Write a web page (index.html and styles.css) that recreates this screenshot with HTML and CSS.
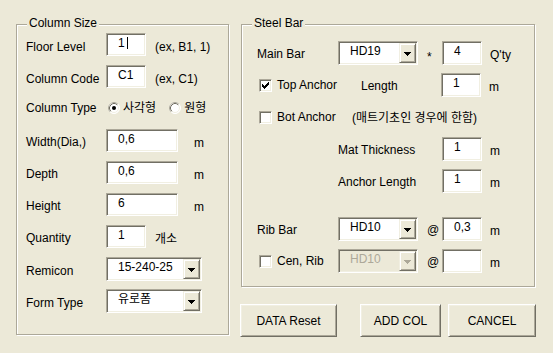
FILE: index.html
```html
<!DOCTYPE html>
<html lang="ko">
<head>
<meta charset="utf-8">
<title>Column</title>
<link rel="stylesheet" href="styles.css">
</head>
<body>
<div class="dialog">
  <section class="group group-column">
    <div class="group-title">Column Size</div>
    <div class="rows">
      <div class="row row-hi">
        <span class="label">Floor Level</span>
        <span class="edit">1<span class="caret"></span></span>
        <span class="hint">(ex, B1, 1)</span>
      </div>
      <div class="row row-hi">
        <span class="label">Column Code</span>
        <span class="edit">C1</span>
        <span class="hint">(ex, C1)</span>
      </div>
      <div class="row row-radio">
        <span class="label">Column Type</span>
        <span class="radio-item">
          <svg class="radio" width="12" height="12" viewBox="0 0 12 12"><circle cx="6" cy="6" r="5.5" fill="#fff" stroke="#fff"/><path d="M2.11 9.89A5.5 5.5 0 0 1 9.89 2.11" fill="none" stroke="#aca899"/><circle cx="6" cy="6" r="4.5" fill="#fff" stroke="#f1efe2"/><path d="M2.82 9.18A4.5 4.5 0 0 1 9.18 2.82" fill="none" stroke="#716f64"/><circle cx="6" cy="6" r="2" fill="#000"/></svg>
          사각형
        </span>
        <span class="radio-item radio-second">
          <svg class="radio" width="12" height="12" viewBox="0 0 12 12"><circle cx="6" cy="6" r="5.5" fill="#fff" stroke="#fff"/><path d="M2.11 9.89A5.5 5.5 0 0 1 9.89 2.11" fill="none" stroke="#aca899"/><circle cx="6" cy="6" r="4.5" fill="#fff" stroke="#f1efe2"/><path d="M2.82 9.18A4.5 4.5 0 0 1 9.18 2.82" fill="none" stroke="#716f64"/></svg>
          원형
        </span>
      </div>
      <div class="row">
        <span class="label">Width(Dia,)</span>
        <span class="edit edit-long">0,6</span>
        <span class="unit unit-far">m</span>
      </div>
      <div class="row">
        <span class="label">Depth</span>
        <span class="edit edit-long">0,6</span>
        <span class="unit unit-far">m</span>
      </div>
      <div class="row">
        <span class="label">Height</span>
        <span class="edit edit-long">6</span>
        <span class="unit unit-far">m</span>
      </div>
      <div class="row">
        <span class="label">Quantity</span>
        <span class="edit">1</span>
        <span class="hint">개소</span>
      </div>
      <div class="row row-hi">
        <span class="label">Remicon</span>
        <span class="combo combo-wide"><span class="combo-text">15-240-25</span><span class="combo-btn"><svg width="7" height="4" viewBox="0 0 7 4"><path d="M0 0h7v1h-1v1h-1v1h-1v1h-1v-1h-1v-1h-1v-1h-1z" fill="#000"/></svg></span></span>
      </div>
      <div class="row row-hi">
        <span class="label">Form Type</span>
        <span class="combo combo-wide"><span class="combo-text">유로폼</span><span class="combo-btn"><svg width="7" height="4" viewBox="0 0 7 4"><path d="M0 0h7v1h-1v1h-1v1h-1v1h-1v-1h-1v-1h-1v-1h-1z" fill="#000"/></svg></span></span>
      </div>
    </div>
  </section>

  <div class="side">
    <section class="group group-steel">
      <div class="group-title">Steel Bar</div>
      <div class="rows">
        <div class="row">
          <span class="label">Main Bar</span>
          <span class="combo combo-bar"><span class="combo-text">HD19</span><span class="combo-btn"><svg width="7" height="4" viewBox="0 0 7 4"><path d="M0 0h7v1h-1v1h-1v1h-1v1h-1v-1h-1v-1h-1v-1h-1z" fill="#000"/></svg></span></span>
          <span class="sep sep-star">*</span>
          <span class="edit">4</span>
          <span class="unit">Q'ty</span>
        </div>
        <div class="row">
          <span class="check check-top"><span class="box"><svg width="11" height="11" viewBox="1 1 11 11"><path d="M3 5v3h1v1h1v1h1v-1h1v-1h1v-1h1v-1h1v-3h-1v1h-1v1h-1v1h-1v1h-1v-1h-1v-1z" fill="#000"/></svg></span>Top Anchor</span>
          <span class="label label-length">Length</span>
          <span class="edit">1</span>
          <span class="unit">m</span>
        </div>
        <div class="row">
          <span class="check check-bot"><span class="box"></span>Bot Anchor</span>
          <span class="note">(매트기초인 경우에 한함)</span>
        </div>
        <div class="row">
          <span class="label label-wide">Mat Thickness</span>
          <span class="edit">1</span>
          <span class="unit">m</span>
        </div>
        <div class="row">
          <span class="label label-wide">Anchor Length</span>
          <span class="edit">1</span>
          <span class="unit">m</span>
        </div>
        <div class="row row-spaced">
          <span class="label">Rib Bar</span>
          <span class="combo combo-bar"><span class="combo-text">HD10</span><span class="combo-btn"><svg width="7" height="4" viewBox="0 0 7 4"><path d="M0 0h7v1h-1v1h-1v1h-1v1h-1v-1h-1v-1h-1v-1h-1z" fill="#000"/></svg></span></span>
          <span class="sep">@</span>
          <span class="edit">0,3</span>
          <span class="unit">m</span>
        </div>
        <div class="row">
          <span class="check check-cen"><span class="box"></span>Cen, Rib</span>
          <span class="combo combo-bar combo-disabled"><span class="combo-text">HD10</span><span class="combo-btn"><svg width="7" height="4" viewBox="0 0 7 4"><path d="M0 0h7v1h-1v1h-1v1h-1v1h-1v-1h-1v-1h-1v-1h-1z" fill="#aca899"/></svg></span></span>
          <span class="sep">@</span>
          <span class="edit"></span>
          <span class="unit">m</span>
        </div>
      </div>
    </section>

    <div class="actions">
      <button class="btn btn-reset" type="button">DATA Reset</button>
      <button class="btn btn-add" type="button">ADD COL</button>
      <button class="btn btn-cancel" type="button">CANCEL</button>
    </div>
  </div>
</div>
</body>
</html>
```

FILE: styles.css
```css
* {
  box-sizing: border-box;
}

html,
body {
  margin: 0;
  padding: 0;
}

body {
  width: 553px;
  height: 353px;
  overflow: hidden;
  background: #ece9d8;
  color: #000;
  font: 12px/14px "Liberation Sans", "Noto Sans CJK KR", sans-serif;
}

.dialog {
  display: flex;
  align-items: flex-start;
  gap: 12px;
  padding: 24px 0 0 16px;
}

/* etched group box */
.group {
  display: flex;
  flex-direction: column;
  border: 1px solid #aca899;
  box-shadow: inset 1px 1px 0 #fff, 1px 1px 0 #fff;
}

.group-column {
  width: 213px;
  height: 311px;
}

.group-steel {
  width: 294px;
  height: 263px;
}

.group-title {
  align-self: flex-start;
  height: 14px;
  margin: -9px 0 0 10px;
  padding: 0 2px;
  background: #ece9d8;
  white-space: nowrap;
}

.rows {
  display: flex;
  flex-direction: column;
}

.group-column .rows {
  margin-top: 3px;
  padding-left: 9px;
}

.group-steel .rows {
  margin-top: 11px;
  padding-left: 15px;
}

.row {
  display: flex;
  align-items: flex-start;
  flex: none;
  height: 32px;
}

.row-spaced {
  margin-top: 16px;
}

.label {
  flex: none;
  width: 80px;
  padding-top: 6px;
  white-space: nowrap;
}

.row-hi .label {
  padding-top: 7px;
}

.row-radio .label {
  padding-top: 4px;
}

.group-steel .label {
  width: 81px;
}

.group-steel .label-length {
  width: 80px;
}

.group-steel .label-wide {
  width: 104px;
  margin-left: 81px;
}

/* sunken edit field */
.edit {
  flex: none;
  width: 40px;
  height: 23px;
  padding: 2px 0 0 11px;
  background: #fff;
  border: 1px solid;
  border-color: #aca899 #fff #fff #aca899;
  box-shadow: inset 1px 1px 0 #716f64, inset -1px -1px 0 #f1efe2;
  white-space: nowrap;
}

.group-steel .edit {
  height: 24px;
}

.edit-long {
  width: 72px;
}

.caret {
  display: inline-block;
  width: 1px;
  height: 12px;
  margin-left: 2px;
  background: #000;
  vertical-align: -2px;
}

.hint {
  flex: none;
  padding: 7px 0 0 9px;
  white-space: nowrap;
}

.unit {
  flex: none;
  padding: 7px 0 0 8px;
  white-space: nowrap;
}

.unit-far {
  padding-left: 16px;
}

.note {
  flex: none;
  padding-top: 6px;
  white-space: nowrap;
}

.sep {
  flex: none;
  width: 24px;
  padding: 6px 0 0 9px;
}

.sep-star {
  padding-top: 9px;
}

/* radio buttons */
.radio-item {
  display: flex;
  align-items: center;
  gap: 3px;
  height: 14px;
  margin: 4px 0 0 2px;
  white-space: nowrap;
}

.radio-second {
  margin-left: 13px;
}

.radio {
  display: block;
  flex: none;
}

/* check boxes */
.check {
  display: flex;
  align-items: center;
  gap: 5px;
  flex: none;
  height: 14px;
  margin-top: 5px;
  padding-left: 2px;
  white-space: nowrap;
}

.check-top {
  width: 104px;
}

.check-bot {
  width: 95px;
}

.check-cen {
  width: 81px;
}

.box {
  flex: none;
  width: 13px;
  height: 13px;
  background: #fff;
  border: 1px solid;
  border-color: #aca899 #fff #fff #aca899;
  box-shadow: inset 1px 1px 0 #716f64, inset -1px -1px 0 #f1efe2;
}

.box svg {
  display: block;
}

/* combo box */
.combo {
  flex: none;
  display: flex;
  height: 24px;
  padding: 1px;
  background: #fff;
  border: 1px solid;
  border-color: #aca899 #fff #fff #aca899;
  box-shadow: inset 1px 1px 0 #716f64, inset -1px -1px 0 #f1efe2;
}

.combo-wide {
  width: 96px;
}

.combo-bar {
  width: 80px;
}

.combo-text {
  flex: 1;
  padding: 1px 0 0 10px;
  white-space: nowrap;
  overflow: hidden;
}

.combo-btn {
  flex: none;
  display: flex;
  align-items: center;
  justify-content: center;
  width: 17px;
  height: 20px;
  padding-top: 1px;
  background: #ece9d8;
  border: 1px solid;
  border-color: #f1efe2 #716f64 #716f64 #f1efe2;
  box-shadow: inset 1px 1px 0 #fff, inset -1px -1px 0 #aca899;
}

.combo-btn svg {
  display: block;
}

.combo-disabled {
  background: #ece9d8;
  color: #aca899;
}

/* right column */
.side {
  display: flex;
  flex-direction: column;
  width: 294px;
}

.actions {
  display: flex;
  margin: 17px 0 0 -1px;
}

.btn {
  flex: none;
  height: 33px;
  padding: 0;
  font: inherit;
  color: #000;
  background: #ece9d8;
  border: 1px solid;
  border-color: #fff #716f64 #716f64 #fff;
  box-shadow: inset 1px 1px 0 #f1efe2, inset -1px -1px 0 #aca899;
}

.btn-reset {
  width: 97px;
}

.btn-add {
  width: 81px;
  margin-left: 23px;
}

.btn-cancel {
  width: 88px;
  margin-left: 7px;
}
```
